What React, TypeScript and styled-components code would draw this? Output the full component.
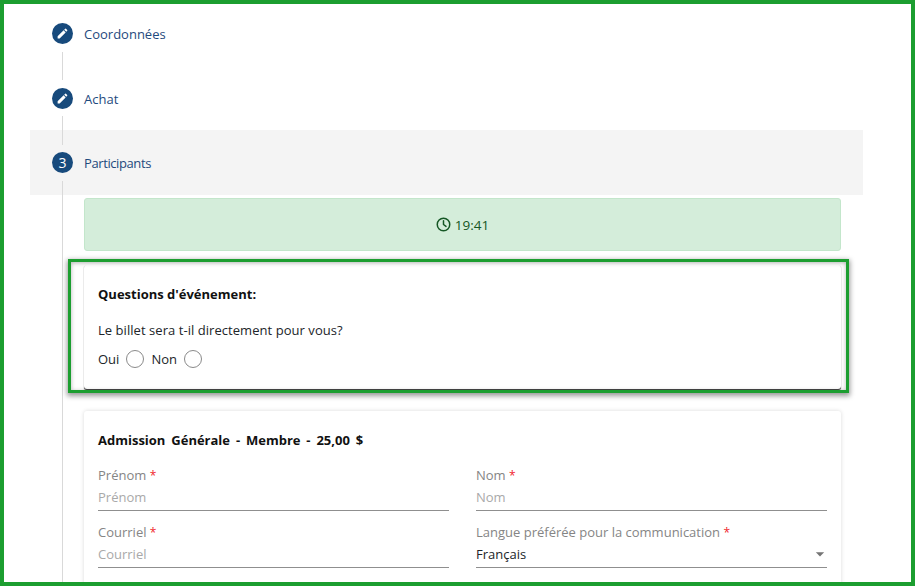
import React from "react";
import styled, { createGlobalStyle } from "styled-components";

const GlobalStyle = createGlobalStyle`
  html, body {
    margin: 0;
    padding: 0;
    background: #fff;
  }
  body {
    font-family: "Open Sans", "Noto Sans", sans-serif;
    font-size: 13px;
    color: #212529;
  }
`;

const Page = styled.div`
  width: 915px;
  height: 586px;
  box-sizing: border-box;
  padding: 1px 52px 0 30px;
  overflow: hidden;
  position: relative;
`;

const Frame = styled.div`
  position: absolute;
  inset: 0;
  border: 4px solid #1c9e30;
  pointer-events: none;
  z-index: 5;
`;

const StepHeader = styled.div<{ $active?: boolean; $short?: boolean }>`
  height: ${(p) => (p.$short ? 64 : 65)}px;
  padding-left: 22px;
  display: flex;
  align-items: center;
  gap: 11px;
  position: relative;
  background: ${(p) => (p.$active ? "#f4f4f4" : "transparent")};

  &::after {
    content: "";
    position: absolute;
    left: 32px;
    top: ${(p) => (p.$short ? 50 : 51)}px;
    width: 1px;
    height: ${(p) => (p.$active ? 14 : p.$short ? 29 : 28)}px;
    background: #d9d9d9;
    z-index: 1;
  }
`;

const StepBadge = styled.div`
  width: 21px;
  height: 21px;
  border-radius: 50%;
  background: #174a7c;
  color: #fff;
  font-size: 14px;
  display: flex;
  align-items: center;
  justify-content: center;
`;

const StepTitle = styled.div<{ $tight?: boolean }>`
  color: #1f4a7d;
  font-size: 13px;
  padding-top: 1px;
  letter-spacing: ${(p) => (p.$tight ? "-0.4px" : "0")};
`;

const StepBody = styled.div`
  margin: 0 22px 0 32px;
  padding: 3px 0 0 21px;
  border-left: 1px solid #d9d9d9;
  display: flex;
  flex-direction: column;
`;

const Alert = styled.div`
  height: 53px;
  box-sizing: border-box;
  background: #d4edda;
  border: 1px solid #c3e6cb;
  border-radius: 3px;
  color: #155724;
  display: flex;
  align-items: center;
  justify-content: center;
  gap: 4px;
  font-size: 13.5px;
`;

const Card = styled.div`
  background: #fff;
  border-radius: 3px;
  box-shadow: 0 0 4px rgba(0, 0, 0, 0.15);
  padding: 20px 15px 15px 14px;
  position: relative;
`;

const QuestionCard = styled(Card)`
  height: 124px;
  box-sizing: border-box;
  margin-top: 14px;
  box-shadow: 0 1px 1px -0.5px rgba(0, 0, 0, 0.8);
`;

const Highlight = styled.div`
  position: absolute;
  left: -16px;
  right: -8px;
  top: -6px;
  bottom: -4px;
  border: 3px solid #1c9e30;
  box-shadow: 0 2px 5px 1px rgba(0, 0, 0, 0.4), inset 0 1px 4px rgba(0, 0, 0, 0.3);
  pointer-events: none;
`;

const CardTitle = styled.div<{ $wide?: boolean }>`
  font-size: 13px;
  font-weight: 700;
  color: #111;
  line-height: 18px;
  word-spacing: ${(p) => (p.$wide ? "2.5px" : "0")};
`;

const Question = styled.div`
  margin-top: 18px;
  font-size: 13px;
  line-height: 18px;
  letter-spacing: 0.05px;
  color: #212529;
`;

const RadioRow = styled.div`
  margin-top: 11px;
  display: flex;
  align-items: center;
  font-size: 13px;
  line-height: 18px;
`;

const Radio = styled.input.attrs({ type: "radio" })`
  appearance: none;
  width: 18px;
  height: 18px;
  margin: 0 7px 0 7px;
  border: 1px solid #8a8a8a;
  border-radius: 50%;
  background: #fff;
`;

const MemberCard = styled(Card)`
  margin-top: 22px;
  height: 300px;
  box-sizing: border-box;
  padding-right: 14px;
`;

const FieldGrid = styled.div`
  margin-top: 17px;
  display: grid;
  grid-template-columns: 351px 351px;
  column-gap: 27px;
  row-gap: 12px;
`;

const Field = styled.div`
  display: flex;
  flex-direction: column;
  height: 45px;
  box-sizing: border-box;
  position: relative;
  border-bottom: 1px solid #8f8f8f;
`;

const FieldLabel = styled.div`
  font-size: 13px;
  line-height: 18px;
  color: #858585;
`;

const Required = styled.span`
  color: #f01f2d;
  font-size: 12px;
`;

const FieldValue = styled.div<{ $placeholder?: boolean }>`
  margin-top: 3px;
  font-size: 13px;
  line-height: 18px;
  color: ${(p) => (p.$placeholder ? "#a9a9a9" : "#212529")};
`;

const Caret = styled.svg`
  position: absolute;
  right: -3px;
  top: 21px;
  width: 20px;
  height: 20px;
  fill: #757575;
`;

const EditIcon = () => (
  <svg width="13" height="13" viewBox="0 0 24 24" fill="#fff">
    <path d="M3 17.25V21h3.75L17.81 9.94l-3.75-3.75L3 17.25zM20.71 7.04c.39-.39.39-1.02 0-1.41l-2.34-2.34a.9959.9959 0 00-1.41 0l-1.83 1.83 3.75 3.75 1.83-1.83z" />
  </svg>
);

const ClockIcon = () => (
  <svg width="15" height="15" viewBox="0 0 24 24" fill="none" stroke="#155724" strokeWidth="2.4" strokeLinecap="round" strokeLinejoin="round">
    <circle cx="12" cy="12" r="10" />
    <polyline points="12 6 12 12 16 15" />
  </svg>
);

const App = () => {
  return (
    <>
      <GlobalStyle />
      <Page>
        <StepHeader>
          <StepBadge><EditIcon /></StepBadge>
          <StepTitle>Coordonnées</StepTitle>
        </StepHeader>
        <StepHeader $short>
          <StepBadge><EditIcon /></StepBadge>
          <StepTitle>Achat</StepTitle>
        </StepHeader>
        <StepHeader $active>
          <StepBadge>3</StepBadge>
          <StepTitle $tight>Participants</StepTitle>
        </StepHeader>
        <StepBody>
          <Alert>
            <ClockIcon />
            19:41
          </Alert>
          <QuestionCard>
            <Highlight />
            <CardTitle>Questions d'événement:</CardTitle>
            <Question>Le billet sera t-il directement pour vous?</Question>
            <RadioRow>
              Oui
              <Radio name="direct" />
              Non
              <Radio name="direct" />
            </RadioRow>
          </QuestionCard>
          <MemberCard>
            <CardTitle $wide>Admission Générale - Membre - 25,00 $</CardTitle>
            <FieldGrid>
              <Field>
                <FieldLabel>Prénom <Required>*</Required></FieldLabel>
                <FieldValue $placeholder>Prénom</FieldValue>
              </Field>
              <Field>
                <FieldLabel>Nom <Required>*</Required></FieldLabel>
                <FieldValue $placeholder>Nom</FieldValue>
              </Field>
              <Field>
                <FieldLabel>Courriel <Required>*</Required></FieldLabel>
                <FieldValue $placeholder>Courriel</FieldValue>
              </Field>
              <Field>
                <FieldLabel>Langue préférée pour la communication <Required>*</Required></FieldLabel>
                <FieldValue>Français</FieldValue>
                <Caret viewBox="0 0 24 24"><path d="M7 10l5 5 5-5z" /></Caret>
              </Field>
            </FieldGrid>
          </MemberCard>
        </StepBody>
      </Page>
      <Frame />
    </>
  );
};

export default App;
